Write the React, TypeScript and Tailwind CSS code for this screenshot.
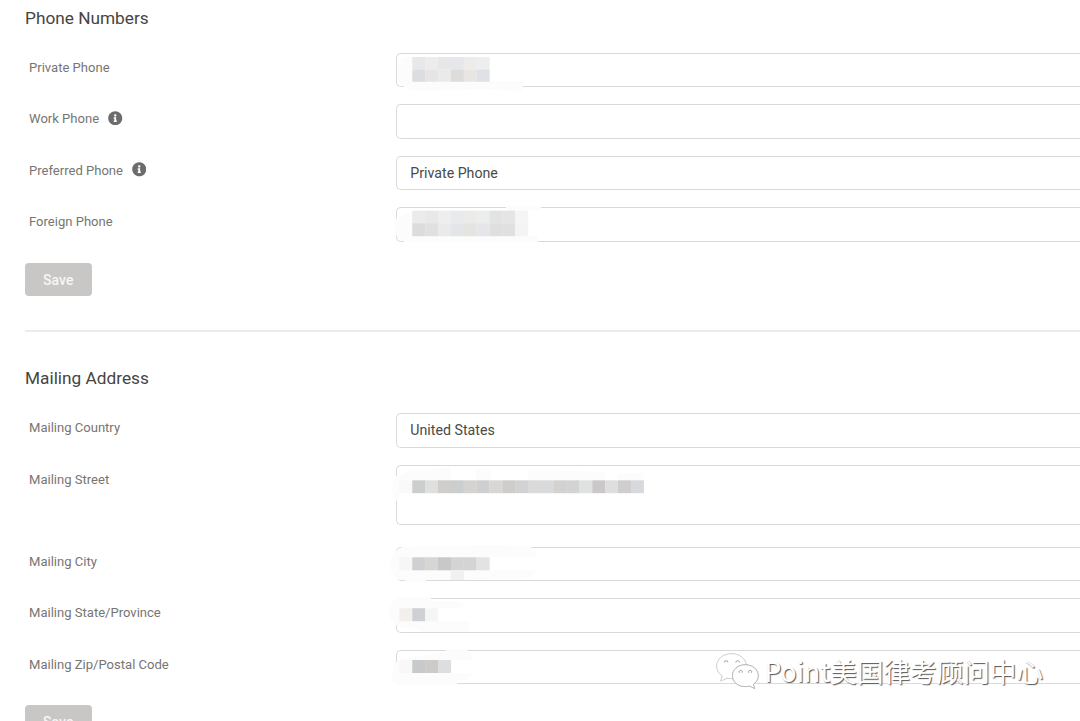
import React from 'react';
import { FaInfoCircle } from 'react-icons/fa';

const CELL = 12.86;

type Strip = { x: number; y: number; h: number; colors: string[] };

type Mask = { smear: string; strips: Strip[] };

type FieldData = {
  label: string;
  value?: string;
  info?: boolean;
  tall?: boolean;
  mask?: Mask;
};

// mask coordinates are relative to the top left corner of the field
const phoneFields: FieldData[] = [
  {
    label: 'Private Phone',
    mask: {
      smear:
        'M2 12 Q4 4 16 4 H94 V28 H127 V36 Q122 40 112 38 Q100 35 60 37 Q20 39 10 36 L6 32 L2 29 Z',
      strips: [
        { x: 16.3, y: 4, h: 12.4, colors: ['#e8e8e8', '#ececec', '#e7e7e7', '#e6e7ea', '#edecea', '#edeef0'] },
        { x: 16.3, y: 16.4, h: 12.4, colors: ['#dcdde0', '#e6e5e3', '#eaeaea', '#dddcd9', '#e7e6e3', '#e0e1e7'] },
      ],
    },
  },
  { label: 'Work Phone', info: true },
  { label: 'Preferred Phone', value: 'Private Phone', info: true },
  {
    label: 'Foreign Phone',
    mask: {
      smear:
        'M-1 12 L16 4 H110 V-1 H145 V3 H132 V29 H142 V35 H8 Q6 32 2 31 Q-3 26 -1 12 Z',
      strips: [
        { x: 16.3, y: 3.6, h: 12.6, colors: ['#ebebeb', '#e8e8e8', '#eeeeee', '#e9eaeb', '#ecebe9', '#ebedee', '#e3e3e3', '#e5e5e5', '#f5f5f5'] },
        { x: 16.3, y: 16.2, h: 13, colors: ['#dbdcde', '#e0e0e0', '#e9ebeb', '#e3e5e8', '#e6e4e0', '#e4e6e9', '#dfdfdf', '#e0e0e0', '#f4f4f4'] },
      ],
    },
  },
];

const mailingFields: FieldData[] = [
  { label: 'Mailing Country', value: 'United States' },
  {
    label: 'Mailing Street',
    tall: true,
    mask: {
      smear:
        'M0 11 L16 5 L54 3 V15 H80 V4 H94 V15 H132 V4 L209 7 V15 H222 V8 H248 V15 H16 V28 H3 V36 H-1 Q-7 24 0 11 Z',
      strips: [
        {
          x: 3.4,
          y: 15.3,
          h: 12.9,
          colors: [
            '#f9f9f9', '#cccdcd', '#dfdfdd', '#d0cecc', '#cacece', '#d5d3d2', '#cdcfd1',
            '#d8d7d6', '#cfcdcc', '#d2d2d5', '#dadada', '#d9dadc', '#d4d2d0', '#d3d3d3',
            '#e0e2e1', '#cbc8c9', '#dedede', '#cfcdcd', '#d8d9dc',
          ],
        },
      ],
    },
  },
  {
    label: 'Mailing City',
    mask: {
      smear:
        'M6 0 Q40 -2 134 -1 L142 10 H94 V23 H141 L134 31 L68 33 H30 V35 H9 V33 H2 Q-6 28 -6 17 Q-5 6 6 0 Z',
      strips: [
        { x: 3.4, y: 10.3, h: 13, colors: ['#f7f6f5', '#cfd0d1', '#d6d6d5', '#c8c8c8', '#d4d4d4', '#d4d4d4', '#e3e3e3'] },
        { x: 54.8, y: 23.3, h: 9.7, colors: ['#f1f1f1'] },
      ],
    },
  },
  {
    label: 'Mailing State/Province',
    mask: {
      smear:
        'M3 -1 H35 V3 H60 Q70 6 70 10 H42 V23 H74 V34 H26 V32 L3 29 Q-7 24 -7 14 Q-6 4 3 -1 Z',
      strips: [{ x: 3.4, y: 10.2, h: 13, colors: ['#f3efec', '#cfd0d4', '#f5f5f5'] }],
    },
  },
  {
    label: 'Mailing Zip/Postal Code',
    mask: {
      smear:
        'M-1 13 Q4 8 16 7 L50 2 V-1 H70 Q76 4 76 10 H56 V23 H76 L70 30 H61 V35 H1 Q-5 32 -4 23 Z',
      strips: [{ x: 3.4, y: 10, h: 13, colors: ['#f9f8f7', '#c8c9ca', '#cdcbc9', '#dddee0'] }],
    },
  },
];

const Redaction = ({ mask }: { mask: Mask }) => (
  <svg className="absolute -left-px -top-px overflow-visible" width="250" height="36">
    <path d={mask.smear} fill="#fcfcfc" />
    {mask.strips.map((strip) =>
      strip.colors.map((color, i) => (
        <rect
          key={`${strip.y}-${i}`}
          x={strip.x + i * CELL}
          y={strip.y}
          width={CELL + 0.2}
          height={strip.h}
          fill={color}
        />
      ))
    )}
  </svg>
);

const Field = ({ label, value, info, tall, mask }: FieldData) => (
  <div className={`flex items-start ${tall ? 'mb-[5px]' : ''}`}>
    <div className="flex w-[371px] shrink-0 items-center pl-1 pt-[5px] text-[13.05px] leading-[19px] text-[#777572]">
      {label}
      {info && <FaInfoCircle className="ml-[9px] -mt-0.5 size-[14.5px] text-[#6b6c6e]" />}
    </div>
    <div
      className={`relative flex-1 rounded-l-[5px] border border-r-0 border-[#dadada] bg-white pl-[13.3px] text-[14.2px] leading-[33px] text-[#4a4a48] ${
        tall ? 'h-[60px]' : 'h-[34.4px]'
      }`}
    >
      {value}
      {mask && <Redaction mask={mask} />}
    </div>
  </div>
);

const SaveButton = () => (
  <button className="block h-[33.5px] w-[66.5px] rounded-[4px] bg-[#c9c7c5] pt-px text-[14px] font-medium text-[#f7f6f6]">
    Save
  </button>
);

const Watermark = () => (
  <div className="absolute left-[716px] top-[652px] flex items-start">
    <svg width="46" height="40" viewBox="0 0 46 40" fill="none">
      <g className="drop-shadow-[0.7px_0.8px_0.3px_#8a8a8a]">
        <path
          d="M15.5 1.8C7 1.8.8 7.2.8 14c0 4.2 2.2 7.6 5.6 9.9L4.8 29l6-3c1.6.4 3 .6 4.7.6 8.4 0 14.8-5.4 14.8-12.4S24 1.8 15.5 1.8Z"
          fill="#fff"
          stroke="#dcdcdc"
          strokeWidth="0.6"
        />
      </g>
      <g className="drop-shadow-[0.7px_0.8px_0.3px_#8a8a8a]">
        <path
          d="M29.3 12.8c-7.2 0-12.8 4.800-12.8 10.9s5.6 10.9 12.8 10.9c1.6 0 3-.2 4.4-.6l4.9 2.5-1.3-4.2c2.9-2 4.9-5 4.9-8.6 0-6.1-5.7-10.9-12.9-10.9Z"
          fill="#fff"
          stroke="#b5b5b5"
          strokeWidth="0.7"
        />
      </g>
      <path
        d="M8.3 10.5a1.8 1.8 0 0 1 3.6 0M19.8 10.5a1.8 1.8 0 0 1 3.6 0M23.5 20.8a1.6 1.6 0 1 1 2.6 0M32.8 20.8a1.6 1.6 0 1 1 2.6 0"
        stroke="#999"
        strokeWidth="0.9"
      />
    </svg>
    <span className="-mt-[1.5px] ml-[2.5px] whitespace-nowrap font-['Noto_Sans_CJK_SC',sans-serif] text-[26.6px] leading-[40px] text-white [text-shadow:1px_1px_1px_#555]">
      Point美国律考顾问中心
    </span>
  </div>
);

const App = () => {
  return (
    <div className="relative h-[721px] w-full overflow-hidden bg-white pl-[25px] font-[Roboto,sans-serif]">
      <section className="pt-[6px]">
        <h2 className="text-[17.25px] leading-6 text-[#454543]">Phone Numbers</h2>
        <div className="mt-[23px] flex flex-col gap-[17px]">
          {phoneFields.map((field) => (
            <Field key={field.label} {...field} />
          ))}
        </div>
        <div className="mt-[21.2px]">
          <SaveButton />
        </div>
      </section>
      <hr className="mt-[33.5px] h-[2px] border-t-0 bg-[#ebebeb]" />
      <section className="pt-[34.4px]">
        <h2 className="text-[17.25px] leading-6 text-[#454543]">Mailing Address</h2>
        <div className="mt-[23px] flex flex-col gap-[17.1px]">
          {mailingFields.map((field) => (
            <Field key={field.label} {...field} />
          ))}
        </div>
        <div className="mt-[21px]">
          <SaveButton />
        </div>
      </section>
      <Watermark />
    </div>
  );
};

export default App;
